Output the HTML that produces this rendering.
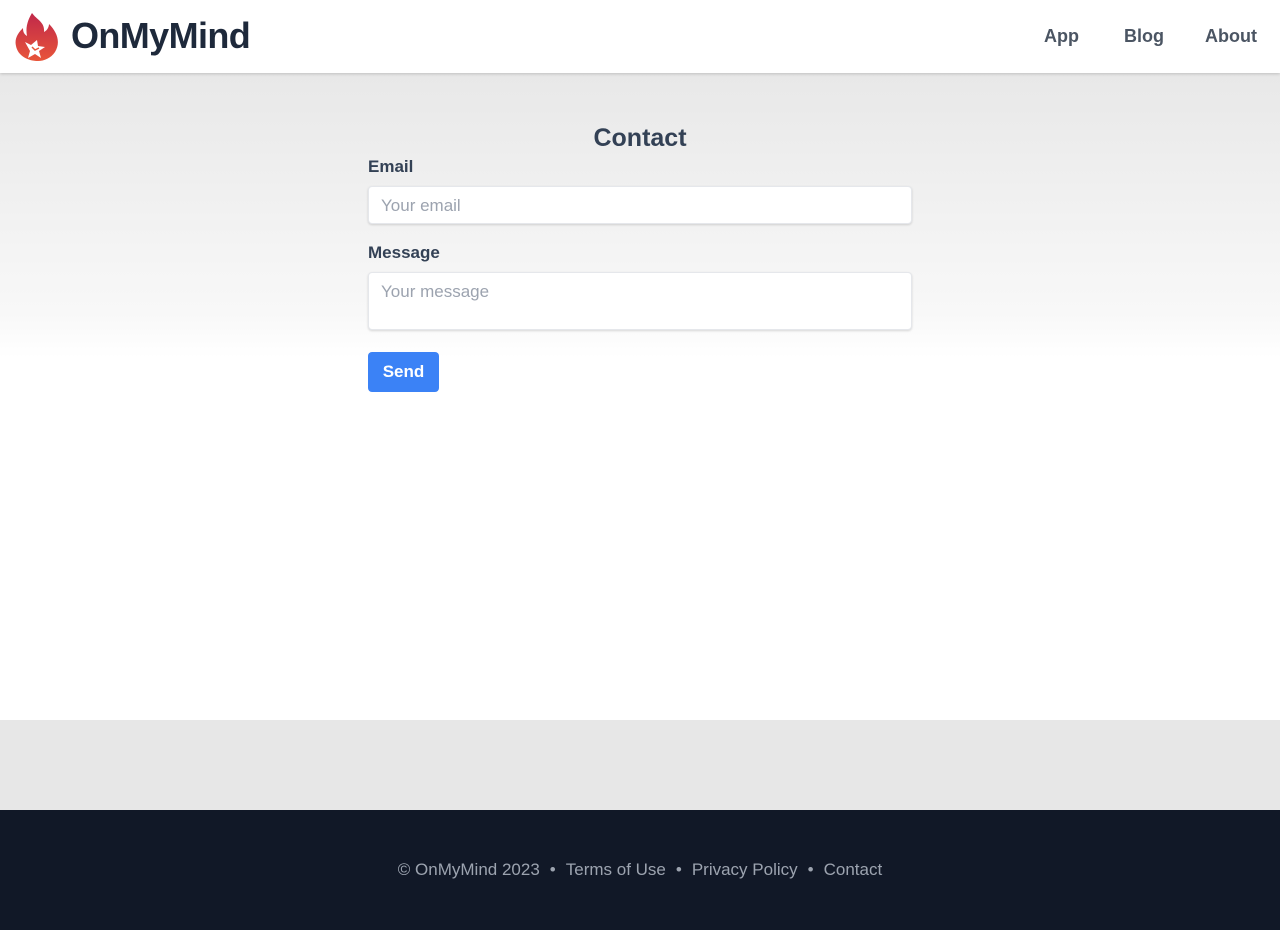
<!DOCTYPE html>
<html><head><meta charset="utf-8"><style>
*{box-sizing:border-box;margin:0;padding:0}
body{width:1280px;height:930px;font-family:"Liberation Sans",Arial,sans-serif;background:#fff;position:relative;overflow:hidden}
header{position:absolute;top:0;left:0;width:1280px;height:73px;background:#fff;box-shadow:0 1px 3px rgba(0,0,0,.18);z-index:2}
.logo{position:absolute;left:15px;top:12px}
.brand{position:absolute;left:71px;top:15px;font-size:36px;font-weight:bold;color:#1e293b;letter-spacing:-0.6px}
nav a{position:absolute;top:26px;font-size:18px;font-weight:bold;color:#4b5563;text-decoration:none}
.main{position:absolute;top:73px;left:0;width:1280px;height:647px;background:linear-gradient(#e8e8e8 0,#f8f8f8 240px,#fff 285px)}
h1{position:absolute;top:51px;left:0;width:1280px;text-align:center;font-size:25px;color:#334155}
label{position:absolute;left:368px;font-size:17px;font-weight:bold;color:#334155}
.in{position:absolute;left:368px;width:544px;background:#fff;border:1px solid #e5e7eb;border-radius:4px;box-shadow:0 1px 2px rgba(0,0,0,.15);color:#9ca3af;font-size:17px;padding-left:12px}
.btn{position:absolute;left:368px;top:279px;width:71px;height:40px;background:#3b82f6;border-radius:4px;color:#fff;font-weight:bold;font-size:17px;text-align:center;line-height:40px}
.gray{position:absolute;top:720px;left:0;width:1280px;height:90px;background:#e7e7e7}
footer{position:absolute;top:810px;left:0;width:1280px;height:120px;background:#111827;color:#9ca3af;font-size:17px;text-align:center;line-height:120px}
footer span{margin:0 10px}
</style></head><body>
<header>
<svg class="logo" width="46" height="50" viewBox="0 0 46 50">
<defs><linearGradient id="g" x1="0" y1="0" x2="0" y2="1"><stop offset="0" stop-color="#c0284a"/><stop offset="1" stop-color="#e8553a"/></linearGradient></defs>
<path d="M17 1C22 8 30 10 29 20C33 18 34 14 34 12C42 20 46 30 40 40C36 46 29 49 23 49C13 49 3 44 1 34C-1 26 4 20 8 16C8 20 9 22 12 24C10 14 14 6 17 1Z" fill="url(#g)"/>
<path d="M10 30L16 33L22 28L23 34L30 35L24 39L26 46L20 42L13 46L15 39Z" fill="#fff"/>
<path d="M17 35L20 38L24 36" stroke="#e8553a" stroke-width="1.5" fill="none"/>
</svg>
<div class="brand">OnMyMind</div>
<nav><a style="left:1044px">App</a><a style="left:1124px">Blog</a><a style="left:1205px">About</a></nav>
</header>
<div class="main">
<h1>Contact</h1>
<label style="top:84px">Email</label>
<div class="in" style="top:113px;height:38px;line-height:37px">Your email</div>
<label style="top:170px">Message</label>
<div class="in" style="top:199px;height:58px;line-height:37px">Your message</div>
<div class="btn">Send</div>
</div>
<div class="gray"></div>
<footer>© OnMyMind 2023<span>•</span>Terms of Use<span>•</span>Privacy Policy<span>•</span>Contact</footer>
</body></html>
